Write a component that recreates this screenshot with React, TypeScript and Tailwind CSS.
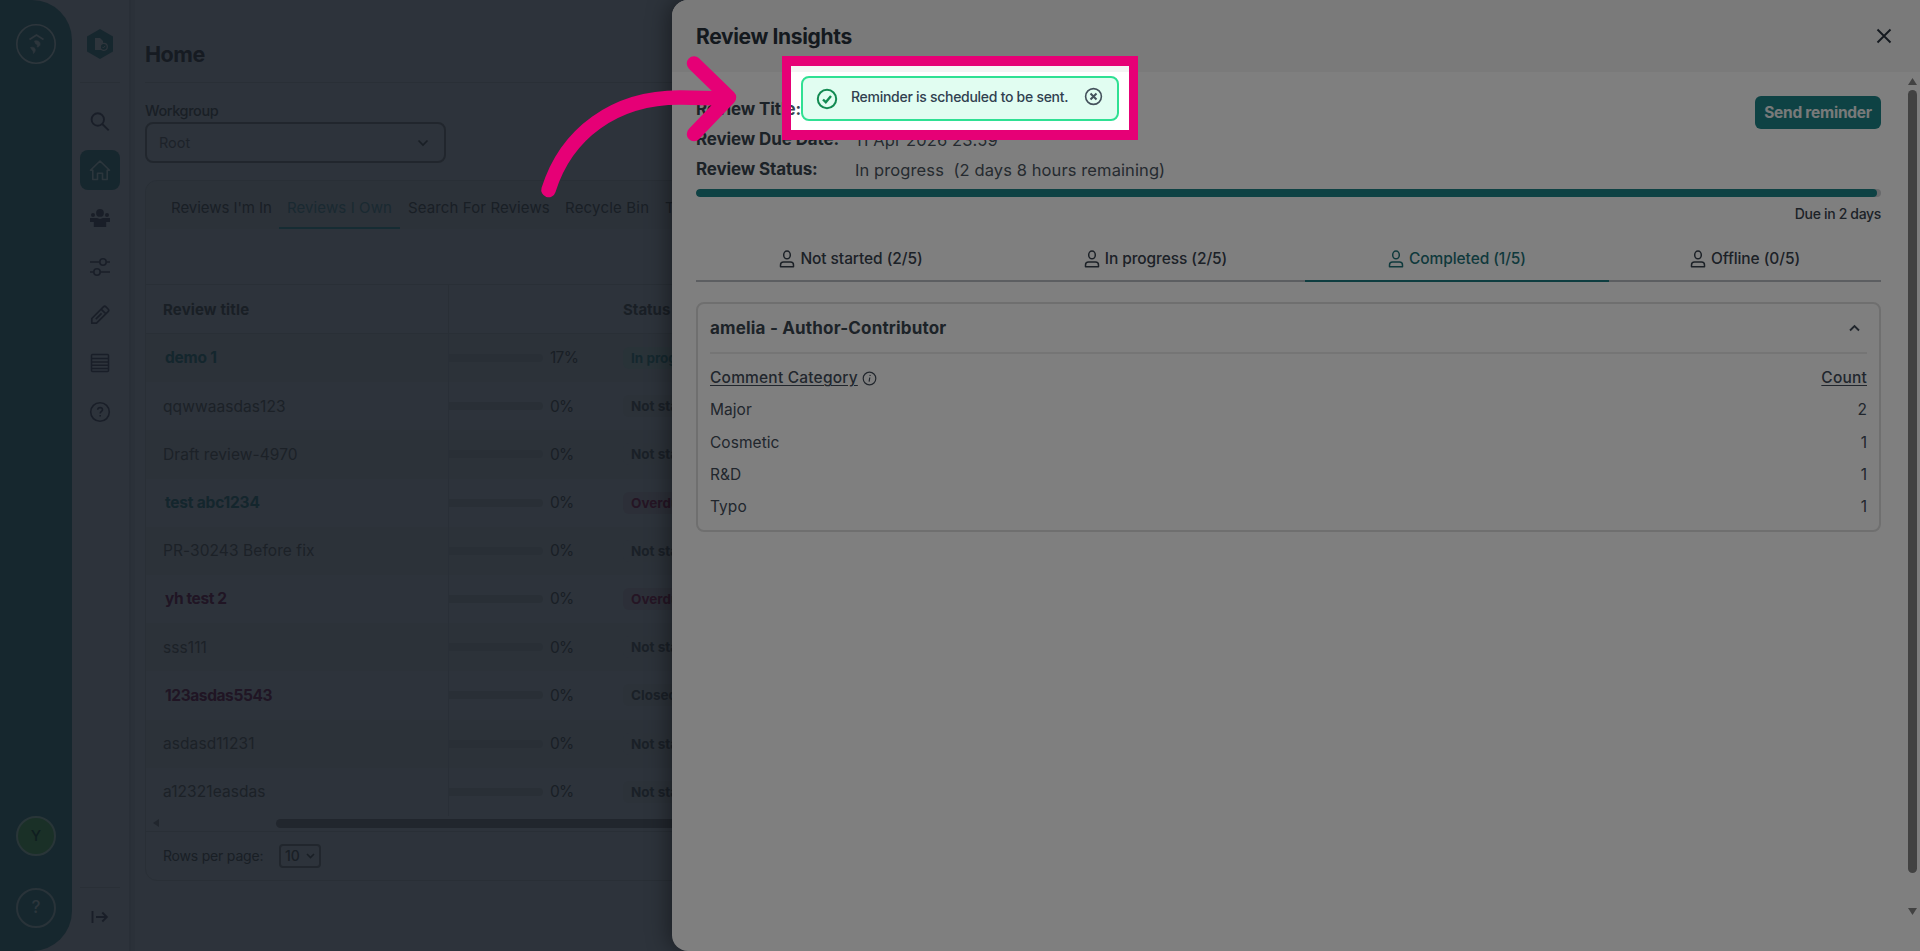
import React from "react";

const ROWS: { title: string; tone: "link" | "late" | "plain"; pct: string; status: string; badge: string }[] = [
  { title: "demo 1", tone: "link", pct: "17%", status: "In progress", badge: "bg-[#536671] text-[#2a4f5c]" },
  { title: "qqwwaasdas123", tone: "plain", pct: "0%", status: "Not started", badge: "bg-[#586472] text-[#34404e]" },
  { title: "Draft review-4970", tone: "plain", pct: "0%", status: "Not started", badge: "bg-[#586472] text-[#34404e]" },
  { title: "test abc1234", tone: "link", pct: "0%", status: "Overdue", badge: "bg-[#585f70] text-[#4a2a48]" },
  { title: "PR-30243 Before fix", tone: "plain", pct: "0%", status: "Not started", badge: "bg-[#586472] text-[#34404e]" },
  { title: "yh test 2", tone: "late", pct: "0%", status: "Overdue", badge: "bg-[#585f70] text-[#4a2a48]" },
  { title: "sss111", tone: "plain", pct: "0%", status: "Not started", badge: "bg-[#586472] text-[#34404e]" },
  { title: "123asdas5543", tone: "late", pct: "0%", status: "Closed", badge: "bg-[#586472] text-[#34404e]" },
  { title: "asdasd11231", tone: "plain", pct: "0%", status: "Not started", badge: "bg-[#586472] text-[#34404e]" },
  { title: "a12321easdas", tone: "plain", pct: "0%", status: "Not started", badge: "bg-[#586472] text-[#34404e]" },
];

const TITLE_TONE = {
  link: "pl-5 font-bold tracking-[-0.200px] text-[#284c5a]",
  late: "pl-5 font-bold tracking-[-0.400px] text-[#402b48]",
  plain: "pl-[18px] tracking-[0.080px] text-[#38434f]",
};

const CATEGORIES = [
  ["Major", "2"],
  ["Cosmetic", "1"],
  ["R&D", "1"],
  ["Typo", "1"],
];

function Person() {
  return (
    <svg width="16" height="18" viewBox="0 0 16 18" fill="none" stroke="currentColor" strokeWidth="1.5">
      <ellipse cx="8" cy="4.900" rx="3.300" ry="3.900" />
      <path d="M1.500 16.800v-1.900c0-1.900 1.100-3 3-3h7c1.900 0 3 1.100 3 3v1.900z" strokeLinejoin="round" />
    </svg>
  );
}

function Rail() {
  return (
    <aside className="flex w-[72px] shrink-0 flex-col items-center rounded-r-[40px] bg-[#2d4e5c] pt-6 pb-[23px]">
      <svg width="40" height="40" viewBox="0 0 40 40" fill="none" stroke="#5b6c78">
        <circle cx="20" cy="20" r="19.2" strokeWidth="1.6" />
        <path d="M13.5 15.5 20.5 11l7 4.5" strokeWidth="1.7" />
        <path d="M18.5 17c3-1.2 6 .8 5.600 3.500-.3 1.700-1.600 2.600-3 2.500.8-1.600 0-2.800-1.600-3.200zM14.500 23.500c2.500-1 5 .2 4.800 2.600-.1 1.500-.8 2.700-2 3.400.200-1.800-.2-2.500-1-3.200z" fill="#5b6c78" strokeWidth="0.600" />
      </svg>
      <div className="grow" />
      <div className="flex size-10 items-center justify-center rounded-full border-[2px] border-[#526b70] bg-[#35604e] text-[15px] font-medium text-[#1f3d40]">Y</div>
      <div className="mt-8 flex size-10 items-center justify-center rounded-full border-[2px] border-[#526672] text-[17px] font-medium text-[#5a6d79]">?</div>
    </aside>
  );
}

function SideNav() {
  return (
    <nav className="flex w-[59px] shrink-0 flex-col items-center border-r-2 border-[#535f6e] pt-[29px] pr-px text-[#333d50]">
      <svg width="28" height="30" viewBox="0 0 28 30">
        <path d="M14 0 27 7.500v15L14 30 1 22.500v-15z" fill="#2d4e5c" />
        <path d="M9 9h5l3 3v3l-2 6H9z" fill="#5d6b79" />
        <circle cx="17.800" cy="17.800" r="3.500" fill="#2d4e5c" stroke="#5d6b79" strokeWidth="1.200" />
        <path d="m16.300 17.800 1.100 1.100 1.900-2.100" fill="none" stroke="#5d6b79" />
      </svg>
      <div className="mt-[23px] h-px w-10 bg-[#525e6c]" />
      <svg className="mt-[27px]" width="24" height="24" viewBox="0 0 24 24" fill="none" stroke="currentColor" strokeWidth="1.900">
        <circle cx="9.800" cy="9.500" r="6.200" />
        <path d="m14.300 14 6.400 6.400" />
      </svg>
      <div className="mt-4 flex size-10 items-center justify-center rounded-lg bg-[#2d4e5c] text-[#586c79]">
        <svg width="22" height="22" viewBox="0 0 22 22" fill="none" stroke="currentColor" strokeWidth="1.600" strokeLinejoin="round">
          <path d="M1.500 11.300 11 2l9.500 9.300h-2.300v9.200h-4.700v-6.200h-5v6.200H3.800v-9.200z" />
        </svg>
      </div>
      <svg className="mt-4" width="24" height="24" viewBox="0 0 24 24" fill="currentColor">
        <circle cx="12" cy="6.900" r="3.900" />
        <circle cx="5" cy="9" r="2" />
        <circle cx="19" cy="9" r="2" />
        <path d="M2 12h7l3 1 3-1h7v4h-3.800v5H5.800v-5H2z" />
      </svg>
      <svg className="mt-[25px]" width="24" height="24" viewBox="0 0 24 24" fill="none" stroke="currentColor" strokeWidth="1.600">
        <path d="M2 7h9.500M18.500 7H22M2 17h3.500M12.500 17H22" />
        <circle cx="15" cy="7" r="3.200" />
        <circle cx="9" cy="17" r="3.200" />
      </svg>
      <svg className="mt-6" width="24" height="24" viewBox="0 0 24 24" fill="none" stroke="currentColor" strokeWidth="1.700" strokeLinejoin="round">
        <path d="M3.800 20.200v-4.700L15.400 3.900c.8-.8 1.800-.8 2.600 0l2.100 2.100c.8.8.8 1.800 0 2.600L8.500 20.200zM13.300 6.300l4.400 4.400M7.800 16.200l5.800-5.800" />
      </svg>
      <svg className="mt-6" width="24" height="24" viewBox="0 0 24 24" fill="none" stroke="currentColor" strokeWidth="1.500">
        <rect x="3.500" y="3.500" width="17" height="17" rx="1" />
        <path d="M3.500 7.500h17M3.500 10.900h17M3.500 14.300h17M3.500 17.500h17" />
      </svg>
      <svg className="mt-[25px]" width="24" height="24" viewBox="0 0 24 24" fill="none" stroke="currentColor" strokeWidth="1.600">
        <circle cx="12" cy="12" r="9.300" />
        <path d="M9.700 9.800c.1-1.500 1.100-2.200 2.400-2.200s2.400.8 2.400 2.100c0 1.800-2.300 1.800-2.300 3.900M12.200 15v1.600" />
      </svg>
      <div className="grow" />
      <div className="h-px w-10 bg-[#525e6c]" />
      <svg className="mt-[19px] mb-[24px]" width="20" height="20" viewBox="0 0 20 20" fill="none" stroke="currentColor" strokeWidth="1.900">
        <path d="M2.500 4v12M6 10h10.500M12.300 5.500l4.500 4.500-4.500 4.500" />
      </svg>
    </nav>
  );
}

function Home() {
  return (
    <main className="flex grow flex-col border-l-[4px] border-[#576372] pl-[10px] text-[#333e4b]">
      <header className="flex h-[83px] shrink-0 items-end border-b border-[#525e6c] pb-3">
        <h1 className="text-[21.500px] leading-8 font-bold tracking-[-0.450px] text-[#2c3644]">Home</h1>
      </header>
      <label className="mt-[17px] text-[14.500px] leading-[22px] font-medium tracking-[-0.400px]">Workgroup</label>
      <div className="flex h-[41px] w-[301px] shrink-0 items-center justify-between rounded-lg border-2 border-[#424d5a] px-3">
        <span className="text-[14.500px] text-[#3a4553]">Root</span>
        <svg className="mr-[3px]" width="12" height="8" viewBox="0 0 12 8" fill="none" stroke="currentColor" strokeWidth="1.700"><path d="m1.500 1.500 4.500 4.500 4.500-4.500" /></svg>
      </div>
      <section className="mt-[17px] flex h-[701px] w-[1760px] shrink-0 flex-col overflow-hidden rounded-xl border border-[#525e6c]">
        <div className="flex h-[48px] shrink-0 bg-[#586473] pl-[17px] text-[15px] leading-[54px] whitespace-nowrap">
          <span className="w-[116px] px-2 tracking-[-0.050px]">Reviews I'm In</span>
          <span className="h-[48px] w-[121px] border-b-2 border-[#2d5966] px-2 tracking-[0.100px] text-[#345362]">Reviews I Own</span>
          <span className="w-[157px] px-2 tracking-[0.120px]">Search For Reviews</span>
          <span className="w-[100px] px-2 tracking-[0.200px]">Recycle Bin</span>
          <span className="px-2">Templates</span>
        </div>
        <div className="h-14 shrink-0 border-b border-[#525e6c]" />
        <div className="flex h-[49px] shrink-0 items-center border-b border-[#535f6d] text-[15px] font-bold">
          <span className="flex h-full w-[303px] items-center border-r border-[#525e6c] pt-[3px] pl-[17px] tracking-[0.150px]">Review title</span>
          <span className="pt-[2px] pl-[174px]">Status</span>
        </div>
        {ROWS.map((r, i) => (
          <div key={r.title} className={`flex h-[48.2px] shrink-0 items-center text-[15.500px] ${i % 2 ? "" : "bg-[#586473]"}`}>
            <span className={`-ml-px flex h-full w-[304px] items-center border-r border-[#535f6e] ${TITLE_TONE[r.tone]}`}>{r.title}</span>
            <span className="h-2 w-[94px] rounded-r bg-[#535f6d]" />
            <span className="w-[80px] pl-[7px] tracking-[-0.700px]">{r.pct}</span>
            <span className={`rounded-md px-2 text-[13.500px] leading-[22px] font-bold ${r.badge}`}>{r.status}</span>
          </div>
        ))}
        <div className="flex h-[16px] shrink-0 items-center border-b border-[#525e6c] pl-[7px]">
          <svg width="6" height="8" viewBox="0 0 6 8" fill="#424c5a"><path d="M6 0v8L0 4z" /></svg>
          <span className="ml-[117px] h-[9px] w-[1400px] rounded-full bg-[#424c5a]" />
        </div>
        <div className="flex grow items-center pl-[17px] text-[14px]">
          <span className="w-[116px] tracking-[-0.200px]">Rows per page:</span>
          <span className="flex h-6 w-[42px] items-center justify-between rounded border-2 border-[#424d5a] px-1 font-medium">
            10
            <svg width="9" height="6" viewBox="0 0 9 6" fill="none" stroke="currentColor" strokeWidth="1.600"><path d="m1 1 3.500 3.500L8 1" /></svg>
          </span>
        </div>
      </section>
    </main>
  );
}

function Field({ label, value }: { label: string; value?: string }) {
  return (
    <div className="flex h-[30px] items-center whitespace-pre">
      <span className="w-[159px] text-[17px] font-bold tracking-[-0.120px] text-[#38454f]">{label}</span>
      {value && <span className="text-[16.500px] tracking-[0.100px] text-[#4b5560]">{value}</span>}
    </div>
  );
}

function Tab({ label, width, active }: { label: string; width: string; active?: boolean }) {
  return (
    <div className={`flex h-[46px] items-center justify-center gap-[5px] border-b-2 pt-[2px] text-[15.500px] font-medium tracking-[-0.080px] ${width} ${active ? "border-[#1c7a80] text-[#1f7379]" : "border-[#b9bcc2] text-[#38424e]"}`}>
      <Person />
      <span>{label}</span>
    </div>
  );
}

function Drawer() {
  return (
    <div className="absolute inset-y-0 right-0 flex w-[1248px] flex-col overflow-hidden rounded-l-[16px] bg-white shadow-[-4px_0_22px_rgba(0,0,0,0.400)]">
      <header className="flex h-[72px] shrink-0 items-center justify-between bg-[#f4f4f4] pr-[28px] pl-[24px]">
        <h2 className="pt-[2px] text-[21px] font-bold tracking-[-0.350px] text-[#28333d]">Review Insights</h2>
        <svg width="16" height="16" viewBox="0 0 16 16" fill="none" stroke="#29323e" strokeWidth="1.900"><path d="m1.500 1.500 13 13M14.500 1.500l-13 13" /></svg>
      </header>
      <div className="flex grow">
        <div className="flex w-[1209px] flex-col pt-[23px] pl-6">
          <div className="flex items-start justify-between">
            <div>
              <Field label="Review Title:" />
              <Field label="Review Due Date:" value="11 Apr 2026 23:59" />
              <Field label="Review Status:" value="In progress  (2 days 8 hours remaining)" />
            </div>
            <button className="mt-px h-[33px] w-[126px] rounded-md bg-[#1c8488] text-[15.500px] font-bold tracking-[-0.250px] text-[#f0f4f4]">Send reminder</button>
          </div>
          <div className="mt-[4px] h-2 w-full overflow-hidden rounded-full bg-[#d0d2d6]">
            <div className="h-full w-[1181px] rounded-full bg-[#1c8488]" />
          </div>
          <span className="mt-[7px] self-end text-[14px] leading-5 font-medium tracking-[-0.330px] text-[#3a444f]">Due in 2 days</span>
          <div className="mt-[12px] flex">
            <Tab label="Not started (2/5)" width="w-[310px]" />
            <Tab label="In progress (2/5)" width="w-[299px]" />
            <Tab label="Completed (1/5)" width="w-[304px]" active />
            <Tab label="Offline (0/5)" width="w-[272px]" />
          </div>
          <section className="mt-5 h-[230px] rounded-lg border-2 border-[#dedede] px-3 text-[15.500px] text-[#434d5a]">
            <div className="flex h-[50px] items-center justify-between border-b-2 border-[#eaeaea] pr-[7px]">
              <h3 className="pt-[2px] text-[17px] font-bold tracking-[0.180px] text-[#3b4651]">amelia - Author-Contributor</h3>
              <svg width="11" height="8" viewBox="0 0 11 8" fill="none" stroke="currentColor" strokeWidth="1.900"><path d="m1 6.500 4.500-4.500L10 6.500" /></svg>
            </div>
            <div className="mt-2 flex h-8 items-center font-medium">
              <span className="tracking-[0.200px] underline underline-offset-2">Comment Category</span>
              <svg className="ml-1" width="15" height="15" viewBox="0 0 15 15" fill="none" stroke="currentColor" strokeWidth="1.200">
                <circle cx="7.500" cy="7.500" r="6.300" />
                <path d="m7.800 6.500-.7 4.200M8.200 3.900 8 5" />
              </svg>
              <span className="ml-auto tracking-[0.200px] underline underline-offset-2">Count</span>
            </div>
            {CATEGORIES.map(([name, count]) => (
              <div key={name} className="flex h-[32.200px] items-center justify-between">
                <span className="tracking-[0.050px]">{name}</span>
                <span>{count}</span>
              </div>
            ))}
          </section>
        </div>
        <div className="ml-auto flex w-[12px] flex-col items-start pt-[6px]">
          <svg width="9" height="7" viewBox="0 0 9 7" fill="#858585"><path d="M4.500 0 9 7H0z" /></svg>
          <div className="mt-[5px] h-[783px] w-[9px] rounded-full bg-[#858585]" />
          <svg className="mt-[35px]" width="9" height="7" viewBox="0 0 9 7" fill="#858585"><path d="M0 0h9L4.500 7z" /></svg>
        </div>
      </div>
    </div>
  );
}

function Toast() {
  return (
    <div className="absolute top-[76px] left-[801px] flex h-[45px] w-[318px] items-center rounded-lg border-2 border-[#2fe093] bg-[#e1fdf1] pl-[13px]">
      <svg width="22" height="22" viewBox="0 0 22 22" fill="none" stroke="#128a52" strokeWidth="2">
        <circle cx="11" cy="11" r="9.200" />
        <path d="m7 11.500 2.800 2.700L15 8" strokeWidth="2.400" />
      </svg>
      <span className="ml-[13px] w-[233px] pb-[4px] text-[14px] font-medium tracking-[-0.280px] text-[#30404f]">Reminder is scheduled to be sent.</span>
      <svg className="mb-[4px]" width="19" height="19" viewBox="0 0 19 19" fill="none" stroke="#44525c" strokeWidth="1.600">
        <circle cx="9.500" cy="9.500" r="7.900" />
        <path d="m6.500 6.500 6 6M12.500 6.500l-6 6" strokeWidth="2" />
      </svg>
    </div>
  );
}

export default function App() {
  return (
    <div className="relative flex h-[951px] w-[1920px] overflow-hidden bg-[#5a6676] font-['Inter',sans-serif]">
      <Rail />
      <SideNav />
      <Home />
      <Drawer />
      <Toast />
      <div className="absolute top-[56px] left-[782px] h-[84px] w-[356px] border-t-[10px] border-r-[9px] border-b-[10px] border-l-[9px] border-[#e60076] shadow-[0_0_0_2000px_rgba(0,0,0,0.500)]" />
      <svg className="absolute top-0 left-0" width="800" height="220" viewBox="0 0 800 220" fill="none" stroke="#e60076" strokeWidth="14.500" strokeLinecap="round" strokeLinejoin="round">
        <path d="M548.500 190C566 134 614 97 681 97.500l44 1M694 63.500l35 34-35 36.500" />
      </svg>
    </div>
  );
}
